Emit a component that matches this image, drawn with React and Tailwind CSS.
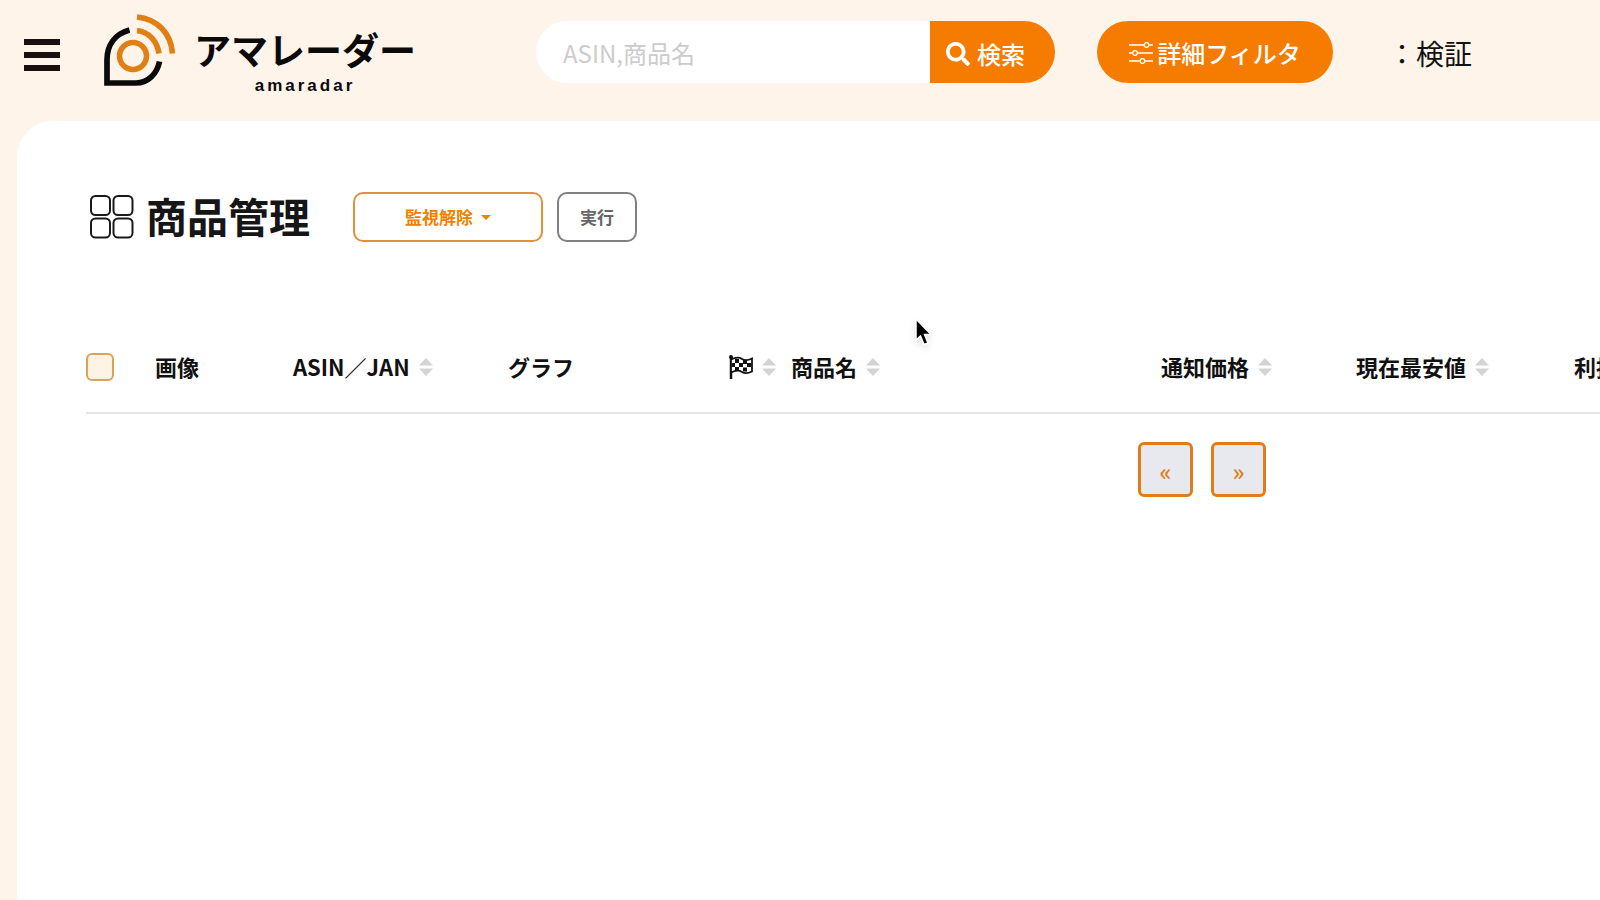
import { useState } from "react";
import { FaSearch } from "react-icons/fa";

const columns = [
    { key: "image", label: "画像", width: "w-[138px]" },
    { key: "asin", label: "ASIN／JAN", width: "w-[215px]", sortable: true },
    { key: "graph", label: "グラフ", width: "w-[221px]" },
    { key: "flag", label: "フラグ", width: "w-[62px]", sortable: true, icon: true },
    { key: "name", label: "商品名", width: "w-[370px]", sortable: true },
    { key: "notify", label: "通知価格", width: "w-[195px]", sortable: true },
    { key: "lowest", label: "現在最安値", width: "w-[218px]", sortable: true },
    { key: "profit", label: "利損額", width: "", sortable: true },
];

function LogoMark() {
    return (
        <svg viewBox="0 0 72 72" className="size-[72px]" fill="none" aria-hidden="true">
            <path d="M25.5 16 C11 20 3 31 3 46 V69 H32 C44 69 53 60 55.500 47.500" stroke="#0a0a0a" strokeWidth="5.700" />
            <circle cx="29" cy="42" r="13.500" stroke="#e07f14" strokeWidth="5.500" />
            <path d="M33 16.500 C45 18 53 27 55 39.500" stroke="#e07f14" strokeWidth="5.700" />
            <path d="M33 3 C53 5 67 19 68.500 39.500" stroke="#e07f14" strokeWidth="5.700" />
        </svg>
    );
}

function SlidersIcon() {
    return (
        <svg viewBox="0 0 24 24" className="size-6" fill="none" stroke="currentColor" strokeWidth="1.300" aria-hidden="true">
            <path d="M0 4h15M20 4h4M0 12h3.500M8.500 12H24M0 20h11M16 20h8" />
            <circle cx="17.500" cy="4" r="2.300" />
            <circle cx="6" cy="12" r="2.300" />
            <circle cx="13.500" cy="20" r="2.300" />
        </svg>
    );
}

function GridIcon() {
    return (
        <svg viewBox="0 0 44 44" className="size-11" fill="none" stroke="#1a1a1a" strokeWidth="2" aria-hidden="true">
            <rect x="1" y="1" width="19" height="19" rx="4.500" />
            <rect x="23.500" y="1" width="19" height="19" rx="4.500" />
            <rect x="1" y="23.500" width="19" height="19" rx="4.500" />
            <rect x="23.500" y="23.500" width="19" height="19" rx="4.500" />
        </svg>
    );
}

function FlagIcon() {
    return (
        <svg viewBox="0 0 24 24" className="size-6" role="img" aria-label="フラグ">
            <circle cx="2" cy="2" r="2" fill="#111" />
            <path d="M2 2V24" stroke="#111" strokeWidth="2.500" />
            <path d="M2 4.500C7 2 10 2 13 4s6 1.500 10-.5v13c-4 2-7 2.500-10 .5s-6-2-11 .5z" fill="#fff" stroke="#111" strokeWidth="1.800" />
            <path d="M6 4h4v4H6zM14 5h4v4h-4zM10 8h4v4h-4zM18 8h4v4h-4zM3 8h3v4H3zM6 12h4v4H6zM14 12.500h4v4h-4z" fill="#111" />
        </svg>
    );
}

function SortIcon() {
    return (
        <svg viewBox="0 0 14 18" className="h-[18px] w-[14px]" fill="#d4d4d4" aria-hidden="true">
            <path d="M7 0L14 7.500H0z" />
            <path d="M7 18L0 10.500H14z" />
        </svg>
    );
}

function Header() {
    const [keyword, setKeyword] = useState("");

    return (
        <header className="flex h-[121px] items-start pl-6">
            <button type="button" aria-label="メニュー" className="mt-[39px] flex w-9 shrink-0 flex-col gap-[7px]">
                <span className="h-[6px] w-full bg-[#1c0f0f]"></span>
                <span className="h-[6px] w-full bg-[#1c0f0f]"></span>
                <span className="h-[6px] w-full bg-[#1c0f0f]"></span>
            </button>

            <a href="#" className="mt-[14px] ml-11 flex w-[432px] shrink-0 gap-[18px] text-[#0a0a0a]">
                <LogoMark />
                <span className="flex flex-col items-center pt-2">
                    <span className="text-[37px] leading-[54px] font-bold">アマレーダー</span>
                    <span className="font-['Liberation_Sans'] text-[17px] leading-5 font-bold tracking-[3px]">amaradar</span>
                </span>
            </a>

            <form className="mt-[21px] flex h-[62px] w-[519px] shrink-0" onSubmit={(e) => e.preventDefault()}>
                <input
                    type="text"
                    aria-label="ASIN,商品名"
                    placeholder="ASIN,商品名"
                    value={keyword}
                    onChange={(e) => setKeyword(e.target.value)}
                    className="min-w-0 flex-1 rounded-l-full bg-white pt-0.5 pl-[27px] text-2xl outline-none placeholder:text-[#cccccc]"
                />
                <button type="submit" className="flex w-[125px] items-center gap-[7px] rounded-r-full bg-[#f57c00] pt-1 pl-4 text-2xl font-medium text-white">
                    <FaSearch />
                    検索
                </button>
            </form>

            <button type="button" className="mt-[21px] ml-[42px] flex h-[62px] w-[236px] shrink-0 items-center justify-center gap-1 rounded-full bg-[#f57c00] pt-0.5 text-2xl font-medium text-white">
                <SlidersIcon />
                詳細フィルタ
            </button>

            <p className="mt-[33px] ml-[55px] shrink-0 text-[28px] leading-[40px] text-[#111111]">：検証</p>
        </header>
    );
}

function ProductTable() {
    return (
        <div className="overflow-hidden">
            <div className="w-[2232px]">
                <table className="w-full table-fixed border-b-2 border-[#e6e6e6] text-left text-[22px] text-[#111111]">
                    <thead>
                        <tr>
                            <th className="h-[92px] w-[69px]">
                                <input
                                    type="checkbox"
                                    aria-label="すべて選択"
                                    className="block size-7 appearance-none rounded-md border-2 border-[#dda25a] bg-[#fff3e6] checked:bg-[#f57c00]"
                                />
                            </th>
                            {columns.map((col) => (
                                <th key={col.key} className={col.width}>
                                    <div className="flex items-center gap-[9px] whitespace-nowrap">
                                        {col.icon ? <FlagIcon /> : col.label}
                                        {col.sortable && <SortIcon />}
                                    </div>
                                </th>
                            ))}
                        </tr>
                    </thead>
                </table>

                <nav aria-label="ページ" className="mt-7 flex justify-center gap-[18px]">
                    <button type="button" aria-label="前へ" className="size-[55px] rounded-md border-3 border-[#e07d1a] bg-[#e8e9ef] pt-0.5 text-2xl font-medium text-[#e07d1a]">
                        «
                    </button>
                    <button type="button" aria-label="次へ" className="size-[55px] rounded-md border-3 border-[#e07d1a] bg-[#e8e9ef] pt-0.5 text-2xl font-medium text-[#e07d1a]">
                        »
                    </button>
                </nav>
            </div>
        </div>
    );
}

// Mouse pointer, floats over the page
function Pointer() {
    return (
        <svg viewBox="0 0 20 30" className="pointer-events-none absolute top-[317px] left-[914px] h-[30px] w-5 drop-shadow-md" aria-hidden="true">
            <path d="M2 2V23L6.500 19L10 27.500L14 26L10.500 17.500H17z" fill="#000" stroke="#fff" strokeWidth="1.500" />
        </svg>
    );
}

export default function App() {
    return (
        <div className="relative flex min-h-screen flex-col overflow-hidden bg-[#fff4e9] font-['Noto_Sans_CJK_JP',sans-serif]">
            <Header />
            <main className="ml-[17px] flex-1 rounded-tl-[36px] bg-white pt-[70px] pl-[69px]">
                <div className="flex items-center">
                    <h1 className="flex w-[267px] items-center gap-3 pl-1 text-[41px] leading-[48px] font-bold text-[#161616]">
                        <GridIcon />
                        <span className="pb-1">商品管理</span>
                    </h1>
                    <button type="button" className="flex h-[50px] w-[190px] items-center justify-center gap-2 rounded-[10px] border-2 border-[#e0913a] text-[17px] font-bold text-[#f08000]">
                        監視解除
                        <span className="border-x-5 border-t-5 border-x-transparent border-t-[#f08000]"></span>
                    </button>
                    <button type="button" className="ml-[14px] h-[50px] w-20 rounded-[10px] border-2 border-[#808080] text-[17px] font-bold text-[#666666]">
                        実行
                    </button>
                </div>
                <div className="mt-[78px]">
                    <ProductTable />
                </div>
            </main>
            <Pointer />
        </div>
    );
}
